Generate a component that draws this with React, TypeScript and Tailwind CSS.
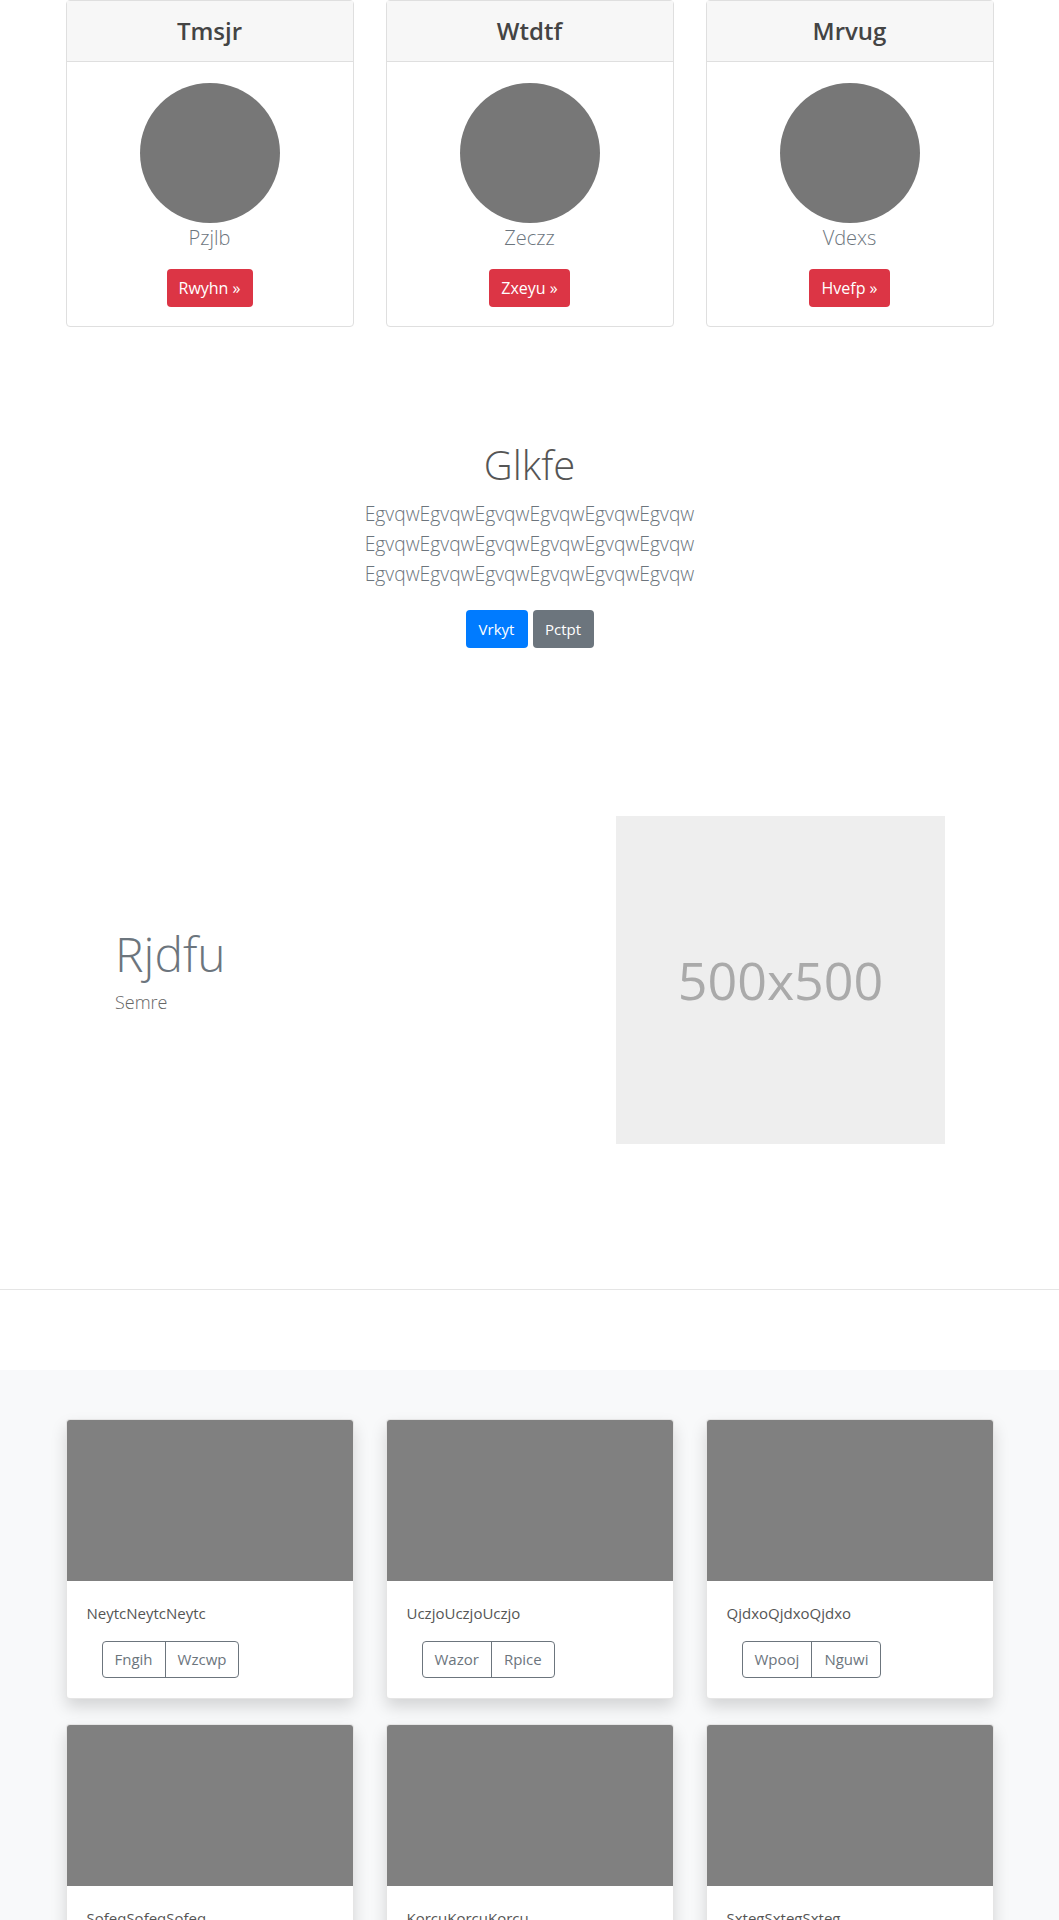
const PLANS = [
  { title: 'Tmsjr', name: 'Pzjlb', cta: 'Rwyhn »' },
  { title: 'Wtdtf', name: 'Zeczz', cta: 'Zxeyu »' },
  { title: 'Mrvug', name: 'Vdexs', cta: 'Hvefp »' },
]

const ALBUM = [
  { text: 'NeytcNeytcNeytc', a: 'Fngih', b: 'Wzcwp' },
  { text: 'UczjoUczjoUczjo', a: 'Wazor', b: 'Rpice' },
  { text: 'QjdxoQjdxoQjdxo', a: 'Wpooj', b: 'Nguwi' },
  { text: 'SofeqSofeqSofeq', a: 'Hktle', b: 'Pramo' },
  { text: 'KorcuKorcuKorcu', a: 'Bdoxi', b: 'Tuvel' },
  { text: 'SxtegSxtegSxteg', a: 'Jmeka', b: 'Olsry' },
]

function PlanCard({ title, name, cta }: { title: string; name: string; cta: string }) {
  return (
    <div className="rounded border border-[#dfdfdf] bg-white text-center">
      <div className="flex h-[61px] items-center justify-center border-b border-[#dfdfdf] bg-[#f7f7f7]">
        <h4 className="text-[24px] font-semibold text-[#444]">{title}</h4>
      </div>
      <div className="flex flex-col items-center px-5 pt-[21px] pb-[19px]">
        <div className="h-[140px] w-[140px] rounded-full bg-[#777]" />
        <p className="text-[20px] leading-[30px] font-light text-[#6c757d]">{name}</p>
        <button className="mt-[16px] h-[38px] rounded bg-[#dc3545] px-3 text-[16px] text-white">{cta}</button>
      </div>
    </div>
  )
}

function AlbumCard({ text, a, b }: { text: string; a: string; b: string }) {
  return (
    <div className="overflow-hidden rounded border border-black/10 bg-white shadow-[0_0.5rem_1rem_rgba(0,0,0,0.15)]">
      <div className="h-[161px] bg-[#808080]" />
      <div className="px-5 pt-5 pb-5">
        <p className="text-[15px] leading-6 text-[#555]">{text}</p>
        <div className="mt-4 ml-[15px] inline-flex h-[37px] rounded border border-[#6c757d] text-[15px] text-[#6c757d]">
          <span className="flex items-center px-3">{a}</span>
          <span className="flex items-center border-l border-[#6c757d] px-3">{b}</span>
        </div>
      </div>
    </div>
  )
}

export default function App() {
  return (
    <div className="min-h-[1920px] bg-white font-['Open_Sans',sans-serif]">
      <section className="mx-auto grid w-[928px] grid-cols-3 gap-x-8">
        {PLANS.map((p) => (
          <PlanCard key={p.title} {...p} />
        ))}
      </section>

      <section className="mt-[114px] text-center">
        <h1 className="text-[40px] leading-[48px] font-light text-[#555]">Glkfe</h1>
        <p className="mt-[10px] text-[19.3px] leading-[30px] font-light text-[#6c757d]">
          <span className="block">EgvqwEgvqwEgvqwEgvqwEgvqwEgvqw</span>
          <span className="block">EgvqwEgvqwEgvqwEgvqwEgvqwEgvqw</span>
          <span className="block">EgvqwEgvqwEgvqwEgvqwEgvqwEgvqw</span>
        </p>
        <div className="mt-[21px] flex justify-center gap-[5px]">
          <button className="h-[38px] w-[62px] rounded bg-[#007bff] text-[15px] text-white">Vrkyt</button>
          <button className="h-[38px] w-[61px] rounded bg-[#6c757d] text-[15px] text-white">Pctpt</button>
        </div>
      </section>

      <section className="mx-auto mt-[168px] flex w-[929px]">
        <div className="w-[551px] pt-[109px] pl-[50px]">
          <h2 className="text-[48px] leading-[58px] font-light text-[#6c757d]">Rjdfu</h2>
          <p className="mt-[4px] text-[18px] leading-[30px] font-light text-[#666]">Semre</p>
        </div>
        <div className="flex h-[328px] w-[329px] items-center justify-center bg-[#eeeeee]">
          <span className="text-[52px] text-[#aaaaaa]">500x500</span>
        </div>
      </section>

      <hr className="mt-[145px] border-0 border-t border-[#e5e5e5]" />

      <section className="mt-[80px] bg-[#f8f9fa] pt-[49px] pb-12">
        <div className="mx-auto grid w-[928px] grid-cols-3 gap-x-8 gap-y-[25px]">
          {ALBUM.map((c) => (
            <AlbumCard key={c.text} {...c} />
          ))}
        </div>
      </section>
    </div>
  )
}
